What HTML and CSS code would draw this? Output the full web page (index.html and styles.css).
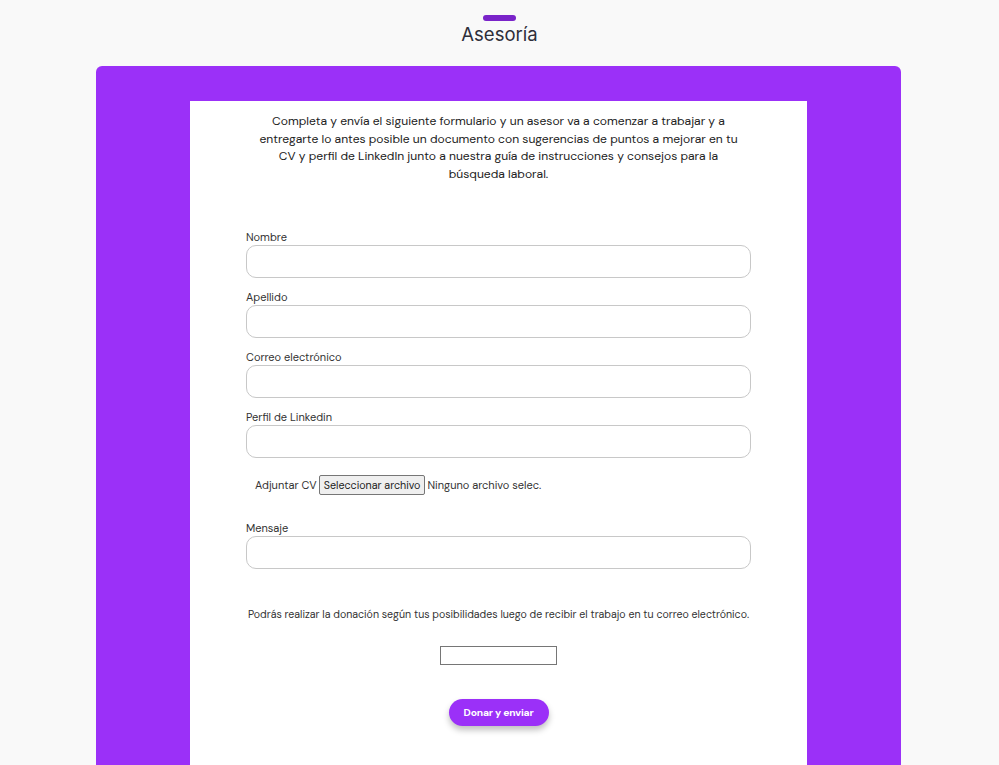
FILE: index.html
```html
<!DOCTYPE html>
<html lang="es">
<head>
<meta charset="utf-8">
<title>Asesoría</title>
<link rel="stylesheet" href="styles.css">
</head>
<body>
<header class="header">
  <div class="bar"></div>
  <h1 class="title">Asesoría</h1>
</header>
<main class="panel">
  <section class="card">
    <p class="intro">Completa y envía el siguiente formulario y un asesor va a comenzar a trabajar y a entregarte lo antes posible un documento con sugerencias de puntos a mejorar en tu CV y perfil de LinkedIn junto a nuestra guía de instrucciones y consejos para la búsqueda laboral.</p>
    <form class="form">
      <div class="field">
        <label class="label">Nombre</label>
        <input class="input" type="text">
      </div>
      <div class="field">
        <label class="label">Apellido</label>
        <input class="input" type="text">
      </div>
      <div class="field">
        <label class="label">Correo electrónico</label>
        <input class="input" type="text">
      </div>
      <div class="field">
        <label class="label">Perfil de Linkedin</label>
        <input class="input" type="text">
      </div>
      <div class="file-row">
        <span class="file-label">Adjuntar CV</span>
        <span class="file-btn">Seleccionar archivo</span>
        <span class="file-name">Ninguno archivo selec.</span>
      </div>
      <div class="field">
        <label class="label">Mensaje</label>
        <input class="input" type="text">
      </div>
      <p class="note">Podrás realizar la donación según tus posibilidades luego de recibir el trabajo en tu correo electrónico.</p>
      <div class="amount"></div>
      <button class="submit" type="button">Donar y enviar</button>
    </form>
  </section>
</main>
</body>
</html>
```
FILE: styles.css
```css
html, body {
  margin: 0;
  padding: 0;
}
body {
  background: #f9f9f9;
  font-family: "DM Sans", Lato, "Open Sans", sans-serif;
  color: #333;
}
.header {
  padding-top: 15px;
  display: flex;
  flex-direction: column;
  align-items: center;
}
.bar {
  width: 33px;
  height: 6px;
  border-radius: 3px;
  background: #7a24c9;
}
.title {
  margin: 1px 0 0;
  font-family: Inter, sans-serif;
  font-weight: 400;
  font-size: 18.5px;
  line-height: 24px;
  color: #2e2e3a;
}
.panel {
  margin: 20px 0 0 96px;
  width: 805px;
  box-sizing: border-box;
  background: #9b30f8;
  border-radius: 6px 6px 0 0;
  padding: 35px 94px 0 94px;
}
.card {
  background: #fff;
  padding: 12px 56px 40px;
  min-height: 640px;
}
.intro {
  margin: 0 auto;
  width: 492px;
  text-align: center;
  font-size: 12.1px;
  line-height: 17.5px;
  color: #222;
}
.form {
  display: flex;
  flex-direction: column;
  margin-top: 47px;
}
.field {
  display: flex;
  flex-direction: column;
  margin-bottom: 12px;
}
.label {
  font-size: 11px;
  line-height: 14px;
  color: #333;
  margin-bottom: 1px;
}
.input {
  height: 33px;
  box-sizing: border-box;
  border: 1px solid #c8c8c8;
  border-radius: 10px;
  background: #fff;
  margin: 0;
  padding: 0 10px;
}
.file-row {
  display: flex;
  align-items: center;
  gap: 2px;
  padding-left: 9px;
  margin-top: 5px;
  margin-bottom: 26px;
  font-size: 11px;
  color: #333;
}
.file-btn {
  border: 1px solid #767676;
  background: #efefef;
  border-radius: 2px;
  height: 20px;
  box-sizing: border-box;
  padding: 0 4px;
  display: flex;
  align-items: center;
  font-size: 10.7px;
  color: #222;
}
.note {
  margin: 26px 0 0;
  text-align: center;
  font-size: 10.6px;
  line-height: 14px;
  color: #333;
}
.amount {
  align-self: center;
  width: 117px;
  height: 19px;
  box-sizing: border-box;
  border: 1px solid #767676;
  margin-top: 25px;
}
.submit {
  align-self: center;
  margin-top: 34px;
  width: 100px;
  height: 27px;
  border: none;
  border-radius: 14px;
  background: #9b30f8;
  color: #fff;
  font-family: "DM Sans", Lato, sans-serif;
  font-weight: 700;
  font-size: 10.3px;
  letter-spacing: -0.2px;
  box-shadow: 0 4px 6px rgba(0,0,0,0.25);
  padding: 0;
}
```
